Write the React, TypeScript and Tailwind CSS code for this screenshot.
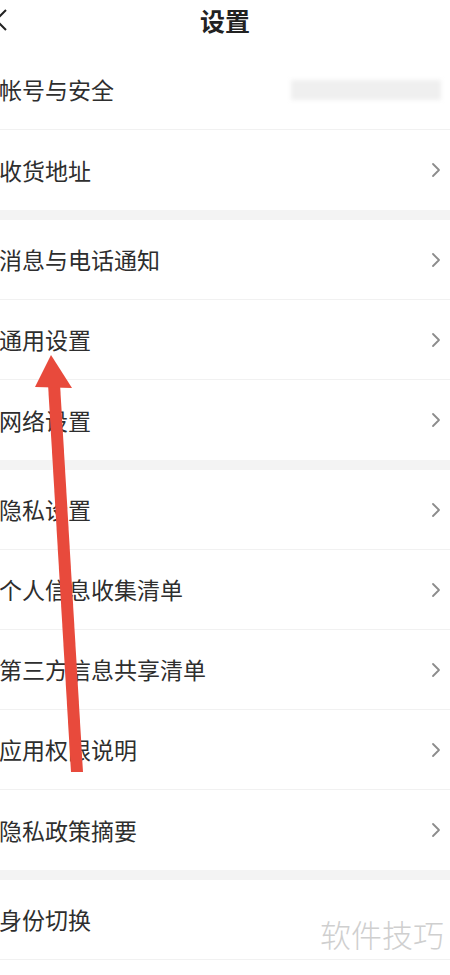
import { ChevronRight } from 'lucide-react';

type Row = { label: string; blurred?: boolean; noArrow?: boolean };

const groups: Row[][] = [
  [{ label: '帐号与安全', blurred: true }, { label: '收货地址' }],
  [{ label: '消息与电话通知' }, { label: '通用设置' }, { label: '网络设置' }],
  [
    { label: '隐私设置' },
    { label: '个人信息收集清单' },
    { label: '第三方信息共享清单' },
    { label: '应用权限说明' },
    { label: '隐私政策摘要' },
  ],
  [{ label: '身份切换', noArrow: true }],
];

function SettingRow({ row, last }: { row: Row; last: boolean }) {
  return (
    <div className={`h-[80px] flex items-center justify-between pr-[2px] ${last ? '' : 'border-b border-[#f1f1f1]'}`}>
      <span className="ml-[-1px] text-[23px] text-[#2e2e2e] leading-none">{row.label}</span>
      {row.blurred ? (
        <div className="w-[150px] h-[20px] bg-[#efefef] blur-[2px] mr-[7px]" />
      ) : row.noArrow ? null : (
        <ChevronRight className="w-[24px] h-[24px] text-[#8c8c8c]" strokeWidth={1.8} />
      )}
    </div>
  );
}

export default function App() {
  return (
    <div
      className="relative w-[450px] h-[975px] bg-white overflow-hidden"
      style={{ fontFamily: '"Noto Sans CJK SC", "Noto Sans", sans-serif' }}
    >
      <header className="relative h-[50px] flex items-center justify-center">
        <svg className="absolute left-0 top-[8px]" width="10" height="24" viewBox="0 0 10 24">
          <path d="M6 2 L-4 12 L6 22" fill="none" stroke="#222" strokeWidth="2" />
        </svg>
        <h1 className="text-[25px] font-bold text-[#222] leading-none mt-[-10px]">设置</h1>
      </header>

      {groups.map((g, gi) => (
        <div key={gi}>
          {gi > 0 && <div className="h-[10px] bg-[#f3f3f3]" />}
          {g.map((row, ri) => (
            <SettingRow key={row.label} row={row} last={gi === groups.length - 1 ? false : ri === g.length - 1} />
          ))}
        </div>
      ))}

      <div className="absolute right-[6px] top-[918px] text-[31px] text-[#cfcfcf] font-light leading-none">
        软件技巧
      </div>

      <svg className="absolute left-0 top-0 pointer-events-none" width="450" height="975" viewBox="0 0 450 975">
        <polygon points="71,772 83,772 60,384 48,384" fill="#e84a3c" />
        <polygon points="51,355 35,387 72,388" fill="#e84a3c" />
      </svg>
    </div>
  );
}
